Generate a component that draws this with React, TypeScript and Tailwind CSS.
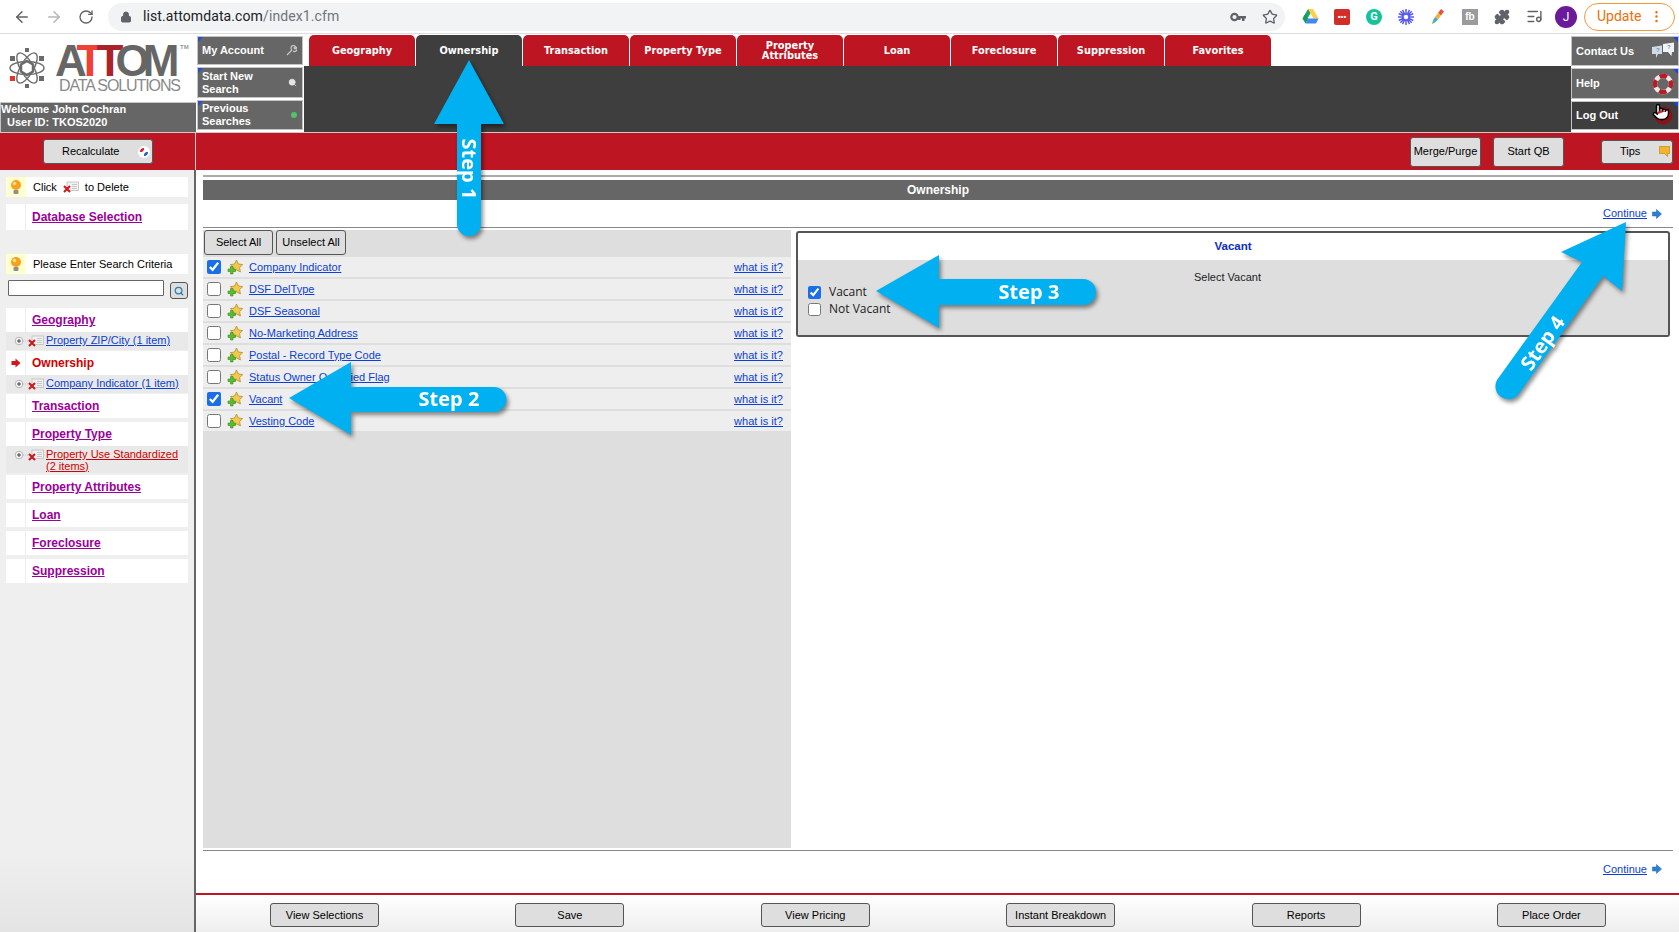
import { ArrowLeft, ArrowRight, RotateCw, Lock, Star, Puzzle, ListMusic, Pointer, Search, EllipsisVertical } from 'lucide-react';

const tabs = ['Geography', 'Ownership', 'Transaction', 'Property Type', 'Property Attributes', 'Loan', 'Foreclosure', 'Suppression', 'Favorites'];

const criteria = [
  { name: 'Company Indicator', checked: true },
  { name: 'DSF DelType', checked: false },
  { name: 'DSF Seasonal', checked: false },
  { name: 'No-Marketing Address', checked: false },
  { name: 'Postal - Record Type Code', checked: false },
  { name: 'Status Owner Occupied Flag', checked: false },
  { name: 'Vacant', checked: true },
  { name: 'Vesting Code', checked: false },
];

const footerButtons = ['View Selections', 'Save', 'View Pricing', 'Instant Breakdown', 'Reports', 'Place Order'];

const Corner = () => (
  <span className="absolute left-0 top-0 h-0 w-0 border-r-[5px] border-t-[5px] border-r-transparent border-t-[#2a4bd0]" />
);

const CornerRight = () => (
  <span className="absolute right-0 top-0 h-0 w-0 border-l-[5px] border-t-[5px] border-l-transparent border-t-[#1f45e0]" />
);

const StarPlus = () => (
  <svg width="17" height="17" viewBox="0 0 17 17" className="shrink-0">
    <path d="M10.500 1l1.900 4 4.300.6-3.100 3 .8 4.400-3.900-2.100-3.800 2.100.7-4.400-3.100-3 4.300-.6z" fill="#f2c84e" stroke="#b08f30" strokeWidth="0.8" />
    <path d="M4.500 7.500h2.500V10h2.500v2.500H7V15H4.500v-2.500H2V10h2.500z" fill="#58c030" stroke="#3c8a1e" strokeWidth="0.6" />
  </svg>
);

const Bulb = () => (
  <svg width="14" height="17" viewBox="0 0 14 17">
    <circle cx="7" cy="6" r="5" fill="#f7a11f" />
    <circle cx="5.500" cy="4.500" r="1.800" fill="#ffe08a" />
    <rect x="4.500" y="11" width="5" height="4" rx="1" fill="#8f8f8f" />
  </svg>
);

const DeleteIcon = () => (
  <svg width="16" height="12" viewBox="0 0 16 12" className="shrink-0">
    <rect x="4" y="1" width="11.500" height="8.500" fill="#f1f1f1" stroke="#bdbdbd" strokeWidth="0.8" />
    <path d="M9 3.500h5M9 5.500h5M9 7.500h5" stroke="#bcbcbc" strokeWidth="0.8" />
    <path d="M1 5l6 6M7 5l-6 6" stroke="#d0151b" strokeWidth="2" />
  </svg>
);

const TreePlus = () => (
  <svg width="20" height="11" viewBox="0 0 20 11" className="shrink-0">
    <circle cx="5" cy="5" r="3.800" fill="#f4f4f4" stroke="#a9a9a9" strokeWidth="0.8" />
    <path d="M3 5h4M5 3v4" stroke="#333" strokeWidth="0.9" />
    <path d="M9 5h10" stroke="#bbbbbb" strokeWidth="0.8" strokeDasharray="1 1" />
  </svg>
);

const BlueArrow = () => (
  <svg width="10" height="10" viewBox="0 0 10 10" className="shrink-0">
    <path d="M0.500 3h4V0.500l5 4.500-5 4.500V7h-4z" fill="#2d7fd8" stroke="#1e5fa8" strokeWidth="0.5" />
  </svg>
);

const GrayButton = ({ label, className }: { label: string; className: string }) => (
  <button className={`flex items-center justify-center rounded-[3px] border border-[#555] bg-[#dedede] text-[11px] text-black ${className}`}>
    {label}
  </button>
);

const HeaderNavButton = ({ lines, icon, className }: { lines: string[]; icon: React.ReactNode; className: string }) => (
  <div className={`relative flex items-center justify-between border border-[#c4c4c4] bg-[#666] pl-[4px] pr-[5px] text-[11px] font-bold leading-[13px] text-white ${className}`}>
    <Corner />
    <span>
      {lines.map((line) => (
        <span key={line} className="block">{line}</span>
      ))}
    </span>
    {icon}
  </div>
);

const SideSection = ({ label, active, mt }: { label: string; active?: boolean; mt: string }) => (
  <div className={`ml-[6px] flex h-[24px] w-[182px] items-center bg-white ${mt}`}>
    <span className="flex h-full w-[20px] items-center justify-center border-r border-[#eee] pl-[1px]">
      {active && (
        <svg width="10" height="10" viewBox="0 0 10 10">
          <path d="M0.500 3h4V0.500l5 4.500-5 4.500V7h-4z" fill="#d8151b" />
        </svg>
      )}
    </span>
    <span className={`pl-[6px] text-[12px] font-bold ${active ? 'text-[#d00000]' : 'text-[#990099] underline'}`}>{label}</span>
  </div>
);

const SideSub = ({ label, red, h }: { label: React.ReactNode; red?: boolean; h: string }) => (
  <div className={`ml-[6px] flex w-[182px] items-start bg-[#e9e9e9] pl-[8px] ${h}`}>
    <span className="mt-[3px] flex items-center">
      <TreePlus />
      <span className="-ml-[6px]"><DeleteIcon /></span>
    </span>
    <span className={`pl-[2px] pt-[2px] text-[11px] leading-[12px] underline ${red ? 'text-[#d00000]' : 'text-[#0b3fd6]'}`}>{label}</span>
  </div>
);

const ChromeBar = () => (
  <div className="flex h-[34px] items-center border-b border-[#dadce0] bg-white">
    <ArrowLeft size={18} className="ml-[13px] text-[#5f6368]" />
    <ArrowRight size={18} className="ml-[14px] text-[#b4b7bb]" />
    <RotateCw size={16} className="ml-[15px] text-[#5f6368]" />
    <div className="ml-[14px] flex h-[28px] w-[1177px] shrink-0 items-center rounded-full bg-[#f1f3f4] pl-[12px] pr-[7px] font-['Roboto',sans-serif] text-[14px] tracking-[0.1px]">
      <Lock size={12} className="fill-[#5f6368] text-[#5f6368]" />
      <span className="ml-[11px] text-[#202124]">list.attomdata.com</span>
      <span className="text-[#70757a]">/index1.cfm</span>
      <svg width="16" height="10" viewBox="0 0 16 10" className="ml-auto">
        <circle cx="4.500" cy="5" r="3.200" fill="none" stroke="#5f6368" strokeWidth="2.200" />
        <path d="M8 4h8v2.500h-1.500V9H12V6.500h-1.500V8H8z" fill="#5f6368" />
      </svg>
      <Star size={16} className="ml-[16px] text-[#5f6368]" />
    </div>
    <div className="ml-[9px] flex items-center">
      <span className="flex w-[32px] justify-center">
        <svg width="17" height="15" viewBox="0 0 17 15">
          <path d="M6 0h5L6 8.500H1z" fill="#1fa463" />
          <path d="M11 0l5.500 9.500h-5L6 0z" fill="#ffcf48" />
          <path d="M3.500 14.500l2.500-5h10.500l-2.500 5z" fill="#4285f4" />
          <path d="M0.500 9.500l3 5 2.700-5-2.700-4.600z" fill="#0f9d58" />
        </svg>
      </span>
      <span className="flex w-[32px] justify-center">
        <span className="flex h-[16px] w-[16px] items-center justify-center rounded-[2px] bg-[#d32d27] text-[8px] font-bold leading-none text-white">•••</span>
      </span>
      <span className="flex w-[32px] justify-center">
        <span className="flex h-[16px] w-[16px] items-center justify-center rounded-full bg-[#15c39a] font-['Roboto',sans-serif] text-[11px] font-bold leading-none text-white">G</span>
      </span>
      <span className="flex w-[32px] justify-center">
        <svg width="16" height="16" viewBox="0 0 16 16" stroke="#5a5cf0" strokeWidth="1.500">
          <path d="M8 0v16M0 8h16M2.300 2.300l11.400 11.400M13.700 2.300L2.300 13.700M4.500 0.800l7 14.400M11.500 0.800l-7 14.400M0.800 4.500l14.400 7M15.200 4.500l-14.400 7" />
          <circle cx="8" cy="8" r="3" fill="#fff" />
        </svg>
      </span>
      <span className="flex w-[32px] justify-center">
        <svg width="14" height="16" viewBox="0 0 14 16">
          <path d="M10 0l3 2.500-3 4-3-2.500z" fill="#e5533d" />
          <path d="M7 4l3 2.500-3 4-3-2.500z" fill="#f2b233" />
          <path d="M4 8l3 2.500-3 3-2-2z" fill="#3fa7d6" />
          <path d="M2 11.500l2 2-3 1.500z" fill="#58b368" />
        </svg>
      </span>
      <span className="flex w-[32px] justify-center">
        <span className="flex h-[16px] w-[16px] items-center justify-center bg-[#9b9b9b] text-[10px] font-bold leading-none text-white">fb</span>
      </span>
      <span className="flex w-[32px] justify-center">
        <Puzzle size={16} className="fill-[#5f6368] text-[#5f6368]" />
      </span>
      <span className="flex w-[32px] justify-center">
        <ListMusic size={17} className="text-[#5f6368]" />
      </span>
    </div>
    <span className="ml-[5px] flex h-[22px] w-[22px] shrink-0 items-center justify-center rounded-full bg-[#6a1b9a] font-['Roboto',sans-serif] text-[12px] text-white">J</span>
    <div className="ml-[7px] flex h-[28px] w-[91px] shrink-0 items-center rounded-full border border-[#f09a37] pl-[12px] font-['Roboto',sans-serif] text-[14px] text-[#e8710a]">
      Update
      <EllipsisVertical size={15} className="ml-[8px]" />
    </div>
  </div>
);

const Logo = () => (
  <div className="relative flex h-[68px] items-center bg-white pl-[9px]">
    <svg width="36" height="42" viewBox="0 0 36 42" fill="none" stroke="#6b6b6b" strokeWidth="1.400">
      <ellipse cx="18" cy="21" rx="17" ry="6.500" />
      <ellipse cx="18" cy="21" rx="17" ry="6.500" transform="rotate(60 18 21)" />
      <ellipse cx="18" cy="21" rx="17" ry="6.500" transform="rotate(120 18 21)" />
      <path d="M18 14l6 3.500v7L18 28l-6-3.500v-7z" strokeWidth="2.500" />
      <rect x="1" y="29" width="5" height="5" fill="#e5342b" stroke="none" />
      <rect x="30" y="9" width="5" height="5" fill="#6b6b6b" stroke="none" />
      <rect x="30" y="29" width="5" height="5" fill="#6b6b6b" stroke="none" />
      <rect x="1" y="9" width="5" height="5" fill="#6b6b6b" stroke="none" />
      <rect x="16" y="1" width="4" height="4" fill="#6b6b6b" stroke="none" />
      <rect x="16" y="37" width="4" height="4" fill="#6b6b6b" stroke="none" />
    </svg>
    <div className="ml-[10px] mt-[2px] flex flex-col items-start">
      <span className="text-[44px] font-bold leading-[33px] tracking-[-7px] text-[#666]">
        A<span className="text-[#ef4136]">T</span><span className="text-[#a8232a]">T</span>OM
      </span>
      <span className="ml-[4px] text-[16px] leading-[17px] tracking-[-1.100px] text-[#8a8a8a]">DATA SOLUTIONS</span>
    </div>
    <span className="absolute left-[180px] top-[10px] text-[6px] font-bold leading-none text-[#999]">TM</span>
  </div>
);

const Header = () => (
  <div className="flex h-[98px]">
    <div className="flex w-[196px] shrink-0 flex-col">
      <Logo />
      <div className="h-[30px] border-l border-t border-[#c4c4c4] bg-[#666] text-[11px] font-bold leading-[13px] text-white">
        <div>Welcome John Cochran</div>
        <div className="pl-[6px]">User ID: TKOS2020</div>
      </div>
    </div>
    <div className="flex w-[108px] shrink-0 flex-col gap-[2px] pl-[1px] pr-[1px] pt-[2px]">
      <HeaderNavButton
        lines={['My Account']}
        className="h-[29px]"
        icon={<svg width="11" height="11" viewBox="0 0 11 11"><path d="M1 10l5-5M6 5a2.500 2.500 0 1 1 3.500-3.500L8 3l1 1 1.500-1.500A2.500 2.500 0 0 1 7 6" stroke="#c9c9c9" strokeWidth="1.200" fill="none" /></svg>}
      />
      <HeaderNavButton
        lines={['Start New', 'Search']}
        className="h-[31px]"
        icon={<Search size={9} className="fill-[#e5e5e5] text-[#e5e5e5]" />}
      />
      <HeaderNavButton
        lines={['Previous', 'Searches']}
        className="h-[30px]"
        icon={<span className="h-[6px] w-[6px] rounded-full bg-[#55c16a]" />}
      />
    </div>
    <div className="flex min-w-0 flex-1 flex-col">
      <div className="flex h-[32px] pl-[5px] pt-[1px]">
        {tabs.map((tab) => (
          <div
            key={tab}
            className={`mr-[1px] flex h-[31px] w-[106px] items-center justify-center rounded-t-[5px] text-center font-['DejaVu_Sans',sans-serif] text-[9.800px] font-bold leading-[10px] text-white ${tab === 'Ownership' ? 'bg-[#3e3e3e]' : 'bg-[#bd1622]'}`}
          >
            {tab === 'Property Attributes' ? <span>Property<br />Attributes</span> : tab}
          </div>
        ))}
      </div>
      <div className="flex-1 bg-[#3e3e3e]" />
    </div>
    <div className="flex w-[108px] shrink-0 flex-col gap-[2px] pt-[2px] text-[11px] font-bold text-white">
      <div className="relative flex h-[30px] items-center justify-between border border-[#c4c4c4] bg-[#666] pl-[4px] pr-[3px]">
        <CornerRight />
        Contact Us
        <svg width="24" height="18" viewBox="0 0 24 18">
          <path d="M1 5l10-1.500v8.500H7l-2 4v-4H1z" fill="#cfdbe8" />
          <path d="M12 2l11-1.500v9.500h-2l-.5 4-3.500-4h-5z" fill="#f0f3f6" />
          <text x="5" y="10" fontSize="6" fill="#6f95c0" fontWeight="700">?</text>
          <text x="16" y="7" fontSize="6" fill="#6f95c0" fontWeight="700">?</text>
        </svg>
      </div>
      <div className="relative flex h-[31px] items-center justify-between border border-[#c4c4c4] bg-[#666] pl-[4px] pr-[4px]">
        <CornerRight />
        Help
        <svg width="22" height="22" viewBox="0 0 22 22">
          <circle cx="11" cy="11" r="8" fill="none" stroke="#e9e9e9" strokeWidth="4.500" />
          <circle cx="11" cy="11" r="8" fill="none" stroke="#b81c25" strokeWidth="4.500" strokeDasharray="7.500 5" strokeDashoffset="3.500" />
        </svg>
      </div>
      <div className="relative flex h-[29px] items-center justify-between border border-[#c4c4c4] bg-[#3e3e3e] pl-[4px] pr-[5px]">
        <CornerRight />
        Log Out
        <svg width="19" height="19" viewBox="0 0 19 19">
          <circle cx="9.500" cy="9.500" r="9" fill="#8c1117" />
          <circle cx="9.500" cy="8" r="6" fill="#d9232c" />
          <path d="M5 8a4.500 4.500 0 0 0 9 0" fill="none" stroke="#fff" strokeWidth="1.300" />
        </svg>
      </div>
    </div>
  </div>
);

const RedBar = () => (
  <div className="flex h-[38px] items-center border-t border-[#ccc] bg-[#bd1622]">
    <div className="flex h-full w-[196px] shrink-0 items-center border-r border-[#ccc] pl-[43px]">
      <button className="relative flex h-[25px] w-[110px] items-center rounded-[3px] border border-[#555] bg-[#dedede] pl-[18px] text-[11px] text-black">
        Recalculate
        <svg width="12" height="12" viewBox="0 0 12 12" className="absolute right-[2px] top-[6px]">
          <circle cx="6" cy="6" r="6" fill="#fff" />
          <path d="M2 6a4 4 0 0 1 4-4v2L4 6z" fill="#d8232a" />
          <path d="M10 6a4 4 0 0 1-4 4V8l2-2z" fill="#1f5fd0" />
        </svg>
      </button>
    </div>
    <GrayButton label="Merge/Purge" className="ml-[1214px] h-[30px] w-[71px]" />
    <GrayButton label="Start QB" className="ml-[12px] h-[30px] w-[71px]" />
    <button className="relative ml-[37px] flex h-[24px] w-[72px] items-start rounded-[3px] border border-[#555] bg-[#dedede] pl-[18px] pt-[2px] text-[11px] text-black">
      Tips
      <svg width="11" height="12" viewBox="0 0 11 12" className="absolute right-[2px] top-[5px]">
        <path d="M0.500 0.500h10v7h-2v3l-3-3h-5z" fill="#f1b52e" stroke="#c58a14" strokeWidth="0.700" />
      </svg>
    </button>
  </div>
);

const Sidebar = () => (
  <aside className="flex w-[196px] shrink-0 flex-col border-r-2 border-[#666] bg-gradient-to-b from-[#efefef] from-90% to-[#e4e4e4] pt-[7px]">
    <div className="ml-[6px] flex h-[20px] w-[182px] items-center bg-white text-[11px] text-black">
      <span className="flex h-full w-[20px] items-center justify-center bg-[#ffffd0]"><Bulb /></span>
      <span className="pl-[7px]">Click</span>
      <span className="ml-[6px]"><DeleteIcon /></span>
      <span className="ml-[6px]">to Delete</span>
    </div>
    <div className="ml-[6px] mt-[7px] flex h-[26px] w-[182px] items-center bg-white">
      <span className="h-full w-[20px] border-r border-[#eee]" />
      <span className="pl-[6px] text-[12px] font-bold text-[#990099] underline">Database Selection</span>
    </div>
    <div className="ml-[6px] mt-[24px] flex h-[20px] w-[182px] items-center bg-white text-[11px] text-black">
      <span className="flex h-full w-[20px] items-center justify-center bg-[#ffffd0]"><Bulb /></span>
      <span className="pl-[7px]">Please Enter Search Criteria</span>
    </div>
    <div className="ml-[8px] mt-[6px] flex h-[19px] items-start">
      <input className="h-[16px] w-[156px] rounded-[1px] border border-[#666] bg-white" />
      <button className="ml-[6px] mt-[2px] flex h-[17px] w-[18px] items-center justify-center rounded-[3px] border border-[#555] bg-[#dedede]">
        <Search size={10} strokeWidth={3} className="text-[#2a7fb8]" />
      </button>
    </div>
    <SideSection label="Geography" mt="mt-[9px]" />
    <SideSub h="h-[18px]" label="Property ZIP/City (1 item)" />
    <SideSection label="Ownership" active mt="mt-[1px]" />
    <SideSub h="h-[18px]" label="Company Indicator (1 item)" />
    <SideSection label="Transaction" mt="mt-[1px]" />
    <SideSection label="Property Type" mt="mt-[4px]" />
    <SideSub h="h-[27px]" red label={<>Property Use Standardized<br />(2 items)</>} />
    <SideSection label="Property Attributes" mt="mt-[2px]" />
    <SideSection label="Loan" mt="mt-[4px]" />
    <SideSection label="Foreclosure" mt="mt-[4px]" />
    <SideSection label="Suppression" mt="mt-[4px]" />
  </aside>
);

const Main = () => (
  <main className="flex min-w-0 flex-1 flex-col bg-white">
    <div className="flex flex-1 flex-col pb-[6px] pl-[7px] pr-[6px] pt-[5px]">
      <div className="h-[2px] bg-[#aaa]" />
      <div className="mt-[3px] flex h-[20px] items-center justify-center bg-[#666] text-[12px] font-bold text-white">Ownership</div>
      <div className="flex h-[27px] items-center justify-end gap-[5px] pr-[11px] text-[11px] text-[#0b3fd6]">
        <span className="underline">Continue</span>
        <BlueArrow />
      </div>
      <div className="h-[1px] bg-[#888]" />
      <div className="mt-[2px] flex h-[618px] gap-[5px]">
        <div className="w-[588px] shrink-0 bg-[#dedede]">
          <div className="flex h-[27px] gap-[3px] pl-[1px]">
            <GrayButton label="Select All" className="h-[25px] w-[69px]" />
            <GrayButton label="Unselect All" className="h-[25px] w-[70px]" />
          </div>
          {criteria.map((item) => (
            <div key={item.name} className="mb-[2px] flex h-[20px] items-center bg-[#eeeeee] pl-[4px] pr-[8px] text-[11px]">
              <input type="checkbox" readOnly checked={item.checked} className="h-[14px] w-[14px] accent-[#1a6fe8]" />
              <span className="ml-[5px]"><StarPlus /></span>
              <span className="ml-[6px] text-[#0b3fd6] underline">{item.name}</span>
              <span className="ml-auto text-[#0b3fd6] underline">what is it?</span>
            </div>
          ))}
        </div>
        <div className="mr-[3px] mt-[1px] h-[106px] flex-1 rounded-[3px] border-2 border-[#555]">
          <div className="flex h-[27px] items-center justify-center text-[11.500px] font-bold text-[#0b2fc9]">Vacant</div>
          <div className="h-[75px] bg-[#dedede] pl-[10px] pt-[9px] text-[11px] text-[#222]">
            <div className="pr-[21px] text-center">Select Vacant</div>
            <label className="mt-[-2px] flex h-[17px] items-center gap-[8px] font-['Open_Sans',sans-serif] text-[12px]">
              <input type="checkbox" readOnly checked className="h-[13px] w-[13px] accent-[#1a6fe8]" />
              Vacant
            </label>
            <label className="flex h-[17px] items-center gap-[8px] font-['Open_Sans',sans-serif] text-[12px]">
              <input type="checkbox" readOnly checked={false} className="h-[13px] w-[13px] accent-[#1a6fe8]" />
              Not Vacant
            </label>
          </div>
        </div>
      </div>
      <div className="mt-[2px] h-[1px] bg-[#888]" />
      <div className="flex flex-1 items-center justify-end gap-[5px] pr-[11px] text-[11px] text-[#0b3fd6]">
        <span className="underline">Continue</span>
        <BlueArrow />
      </div>
    </div>
    <div className="flex h-[39px] items-start gap-[136.400px] border-t-2 border-[#bd1622] bg-gradient-to-b from-white to-[#eeeeee] pl-[74px] pt-[8px]">
      {footerButtons.map((label) => (
        <GrayButton key={label} label={label} className="h-[24px] w-[109px] shrink-0" />
      ))}
    </div>
  </main>
);

// step arrows drawn over the page
const StepArrows = () => (
  <svg width="1679" height="932" viewBox="0 0 1679 932" className="pointer-events-none absolute left-0 top-0 drop-shadow-[2px_3px_2px_rgba(0,0,0,0.45)]">
    <g fill="#00b0f0">
      <path d="M469 60L504 124H481V224a12 12 0 0 1-24 0V124H434z" />
      <path d="M289 398L351 362V387H494a12.500 12.500 0 0 1 0 25H351V435z" />
      <path d="M876 291L939 255V279H1083a13 13 0 0 1 0 26H939V328z" />
      <path d="M1626 222L1622 291L1603 276L1518 395a13 13 0 0 1-21-15L1582 262L1561 252z" />
    </g>
    <g fill="#fff" fontFamily="'Open Sans', sans-serif" fontWeight="700" fontSize="20" textAnchor="middle">
      <text x="449" y="406">Step 2</text>
      <text x="1029" y="299">Step 3</text>
      <text x="467" y="169" dominantBaseline="middle" transform="rotate(90 467 169)">Step 1</text>
      <text x="1544" y="344" dominantBaseline="middle" transform="rotate(-55 1544 344)">Step 4</text>
    </g>
  </svg>
);

export default function App() {
  return (
    <div className="relative flex h-[932px] w-[1679px] flex-col overflow-hidden bg-white font-['Liberation_Sans',Arial,sans-serif]">
      <ChromeBar />
      <Header />
      <RedBar />
      <div className="flex min-h-0 flex-1">
        <Sidebar />
        <Main />
      </div>
      <StepArrows />
      <Pointer size={18} className="absolute left-[1652px] top-[103px] fill-white text-black" />
    </div>
  );
}
